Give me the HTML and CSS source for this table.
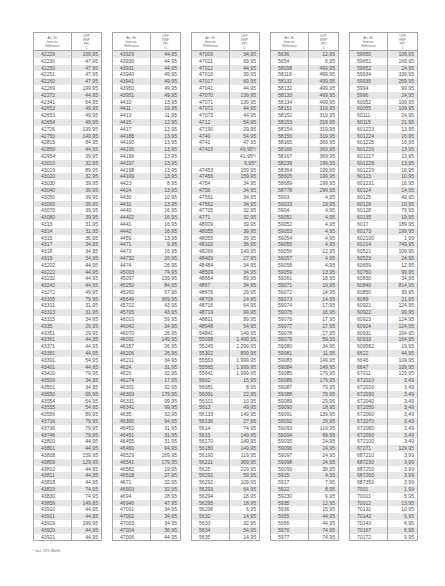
FILE: index.html
```html
<!DOCTYPE html>
<html lang="de">
<head>
<meta charset="utf-8">
<title>Preisliste</title>
<link rel="stylesheet" href="styles.css">
</head>
<body>
<div class="page">
<div class="groups">

<table class="list">
<colgroup><col class="c-art"><col class="c-price"></colgroup>
<thead><tr><th>Art.-Nr.<br>Item no.<br>Référence</th><th>UVP<br>RRP<br>PPI<br>€</th></tr></thead>
<tbody>
<tr><td>42229</td><td>109,95</td></tr>
<tr><td>42230</td><td>47,95</td></tr>
<tr><td>42250</td><td>47,95</td></tr>
<tr><td>42251</td><td>47,95</td></tr>
<tr><td>42260</td><td>47,95</td></tr>
<tr><td>42269</td><td>199,95</td></tr>
<tr><td>42272</td><td>44,95</td></tr>
<tr><td>42341</td><td>64,95</td></tr>
<tr><td>42652</td><td>49,95</td></tr>
<tr><td>42653</td><td>49,95</td></tr>
<tr><td>42654</td><td>49,95</td></tr>
<tr><td>42726</td><td>199,95</td></tr>
<tr><td>42750</td><td>149,95</td></tr>
<tr><td>42815</td><td>84,95</td></tr>
<tr><td>42850</td><td>44,95</td></tr>
<tr><td>42954</td><td>39,95</td></tr>
<tr><td>43010</td><td>32,95</td></tr>
<tr><td>43019</td><td>89,95</td></tr>
<tr><td>43020</td><td>32,95</td></tr>
<tr><td>43030</td><td>39,95</td></tr>
<tr><td>43040</td><td>39,95</td></tr>
<tr><td>43050</td><td>39,95</td></tr>
<tr><td>43060</td><td>39,95</td></tr>
<tr><td>43070</td><td>39,95</td></tr>
<tr><td>43080</td><td>39,95</td></tr>
<tr><td>4313</td><td>31,95</td></tr>
<tr><td>4314</td><td>31,95</td></tr>
<tr><td>4315</td><td>36,95</td></tr>
<tr><td>4317</td><td>34,95</td></tr>
<tr><td>4318</td><td>34,95</td></tr>
<tr><td>4319</td><td>34,95</td></tr>
<tr><td>43202</td><td>44,95</td></tr>
<tr><td>43222</td><td>44,95</td></tr>
<tr><td>43232</td><td>44,95</td></tr>
<tr><td>43242</td><td>44,95</td></tr>
<tr><td>43272</td><td>49,95</td></tr>
<tr><td>43305</td><td>79,95</td></tr>
<tr><td>43311</td><td>31,95</td></tr>
<tr><td>43313</td><td>31,95</td></tr>
<tr><td>43315</td><td>34,95</td></tr>
<tr><td>4335</td><td>29,95</td></tr>
<tr><td>43351</td><td>29,95</td></tr>
<tr><td>43361</td><td>44,95</td></tr>
<tr><td>43371</td><td>44,95</td></tr>
<tr><td>43381</td><td>44,95</td></tr>
<tr><td>43391</td><td>54,95</td></tr>
<tr><td>43401</td><td>44,95</td></tr>
<tr><td>43410</td><td>79,95</td></tr>
<tr><td>43500</td><td>34,95</td></tr>
<tr><td>43501</td><td>34,95</td></tr>
<tr><td>43550</td><td>69,95</td></tr>
<tr><td>43554</td><td>54,95</td></tr>
<tr><td>43555</td><td>54,95</td></tr>
<tr><td>43556</td><td>89,95</td></tr>
<tr><td>43716</td><td>79,95</td></tr>
<tr><td>43736</td><td>79,95</td></tr>
<tr><td>43746</td><td>79,95</td></tr>
<tr><td>43800</td><td>44,95</td></tr>
<tr><td>43801</td><td>44,95</td></tr>
<tr><td>43808</td><td>159,95</td></tr>
<tr><td>43809</td><td>129,95</td></tr>
<tr><td>43810</td><td>44,95</td></tr>
<tr><td>43811</td><td>44,95</td></tr>
<tr><td>43818</td><td>44,95</td></tr>
<tr><td>43820</td><td>74,95</td></tr>
<tr><td>43830</td><td>74,95</td></tr>
<tr><td>43859</td><td>149,95</td></tr>
<tr><td>43910</td><td>44,95</td></tr>
<tr><td>43911</td><td>44,95</td></tr>
<tr><td>43919</td><td>199,95</td></tr>
<tr><td>43920</td><td>44,95</td></tr>
<tr><td>43921</td><td>44,95</td></tr>
</tbody>
</table>

<table class="list">
<colgroup><col class="c-art"><col class="c-price"></colgroup>
<thead><tr><th>Art.-Nr.<br>Item no.<br>Référence</th><th>UVP<br>RRP<br>PPI<br>€</th></tr></thead>
<tbody>
<tr><td>43929</td><td>44,95</td></tr>
<tr><td>43930</td><td>44,95</td></tr>
<tr><td>43931</td><td>44,95</td></tr>
<tr><td>43940</td><td>49,95</td></tr>
<tr><td>43941</td><td>49,95</td></tr>
<tr><td>43950</td><td>49,95</td></tr>
<tr><td>43951</td><td>49,95</td></tr>
<tr><td>4410</td><td>13,95</td></tr>
<tr><td>4411</td><td>19,95</td></tr>
<tr><td>4413</td><td>11,95</td></tr>
<tr><td>4415</td><td>12,95</td></tr>
<tr><td>4417</td><td>13,95</td></tr>
<tr><td>44188</td><td>13,95</td></tr>
<tr><td>44190</td><td>13,95</td></tr>
<tr><td>44195</td><td>13,95</td></tr>
<tr><td>44196</td><td>13,95</td></tr>
<tr><td>44197</td><td>13,95</td></tr>
<tr><td>44198</td><td>13,95</td></tr>
<tr><td>44199</td><td>13,95</td></tr>
<tr><td>4423</td><td>8,95</td></tr>
<tr><td>4424</td><td>13,95</td></tr>
<tr><td>4430</td><td>10,95</td></tr>
<tr><td>4431</td><td>13,95</td></tr>
<tr><td>4440</td><td>16,95</td></tr>
<tr><td>44402</td><td>16,95</td></tr>
<tr><td>4441</td><td>16,95</td></tr>
<tr><td>4442</td><td>16,95</td></tr>
<tr><td>4459</td><td>13,95</td></tr>
<tr><td>4471</td><td>9,95</td></tr>
<tr><td>4473</td><td>16,95</td></tr>
<tr><td>44732</td><td>26,95</td></tr>
<tr><td>4474</td><td>26,95</td></tr>
<tr><td>45093</td><td>74,95</td></tr>
<tr><td>45097</td><td>159,95</td></tr>
<tr><td>45250</td><td>84,95</td></tr>
<tr><td>45260</td><td>57,95</td></tr>
<tr><td>45649</td><td>369,95</td></tr>
<tr><td>45702</td><td>43,95</td></tr>
<tr><td>45705</td><td>43,95</td></tr>
<tr><td>46010</td><td>59,95</td></tr>
<tr><td>46042</td><td>34,95</td></tr>
<tr><td>46070</td><td>26,95</td></tr>
<tr><td>46091</td><td>149,95</td></tr>
<tr><td>46157</td><td>26,95</td></tr>
<tr><td>46206</td><td>26,95</td></tr>
<tr><td>46211</td><td>34,95</td></tr>
<tr><td>4624</td><td>31,95</td></tr>
<tr><td>4626</td><td>32,95</td></tr>
<tr><td>46274</td><td>17,95</td></tr>
<tr><td>46301</td><td>32,95</td></tr>
<tr><td>46303</td><td>179,95</td></tr>
<tr><td>46331</td><td>99,95</td></tr>
<tr><td>46341</td><td>99,95</td></tr>
<tr><td>4635</td><td>32,95</td></tr>
<tr><td>46390</td><td>94,95</td></tr>
<tr><td>46450</td><td>31,95</td></tr>
<tr><td>46451</td><td>31,95</td></tr>
<tr><td>46455</td><td>31,95</td></tr>
<tr><td>46460</td><td>94,95</td></tr>
<tr><td>46529</td><td>169,95</td></tr>
<tr><td>46541</td><td>179,95</td></tr>
<tr><td>46582</td><td>19,95</td></tr>
<tr><td>46618</td><td>27,95</td></tr>
<tr><td>4671</td><td>32,95</td></tr>
<tr><td>46903</td><td>32,95</td></tr>
<tr><td>4694</td><td>28,95</td></tr>
<tr><td>46946</td><td>47,95</td></tr>
<tr><td>47001</td><td>34,95</td></tr>
<tr><td>47002</td><td>34,95</td></tr>
<tr><td>47003</td><td>34,95</td></tr>
<tr><td>47004</td><td>36,95</td></tr>
<tr><td>47006</td><td>44,95</td></tr>
</tbody>
</table>

<table class="list">
<colgroup><col class="c-art"><col class="c-price"></colgroup>
<thead><tr><th>Art.-Nr.<br>Item no.<br>Référence</th><th>UVP<br>RRP<br>PPI<br>€</th></tr></thead>
<tbody>
<tr><td>47009</td><td>34,95</td></tr>
<tr><td>47011</td><td>69,95</td></tr>
<tr><td>47012</td><td>44,95</td></tr>
<tr><td>47016</td><td>39,95</td></tr>
<tr><td>47017</td><td>69,95</td></tr>
<tr><td>47041</td><td>44,95</td></tr>
<tr><td>47070</td><td>139,95</td></tr>
<tr><td>47071</td><td>139,95</td></tr>
<tr><td>47072</td><td>44,95</td></tr>
<tr><td>47073</td><td>44,95</td></tr>
<tr><td>4712</td><td>54,95</td></tr>
<tr><td>47190</td><td>29,95</td></tr>
<tr><td>4740</td><td>54,95</td></tr>
<tr><td>4741</td><td>47,95</td></tr>
<tr><td>47415</td><td>49,95*/</td></tr>
<tr><td></td><td>41,95*/</td></tr>
<tr><td></td><td>9,95*</td></tr>
<tr><td>47453</td><td>159,95</td></tr>
<tr><td>47456</td><td>159,95</td></tr>
<tr><td>4754</td><td>34,95</td></tr>
<tr><td>4756</td><td>34,95</td></tr>
<tr><td>47561</td><td>34,95</td></tr>
<tr><td>47562</td><td>34,95</td></tr>
<tr><td>47705</td><td>32,95</td></tr>
<tr><td>4771</td><td>32,95</td></tr>
<tr><td>48009</td><td>39,95</td></tr>
<tr><td>48055</td><td>39,95</td></tr>
<tr><td>48056</td><td>39,95</td></tr>
<tr><td>48102</td><td>36,95</td></tr>
<tr><td>48266</td><td>149,95</td></tr>
<tr><td>48409</td><td>27,95</td></tr>
<tr><td>48484</td><td>34,95</td></tr>
<tr><td>48509</td><td>34,95</td></tr>
<tr><td>48664</td><td>89,95</td></tr>
<tr><td>4867</td><td>34,95</td></tr>
<tr><td>48676</td><td>29,95</td></tr>
<tr><td>48709</td><td>24,95</td></tr>
<tr><td>48716</td><td>64,95</td></tr>
<tr><td>48719</td><td>99,95</td></tr>
<tr><td>48811</td><td>89,95</td></tr>
<tr><td>48948</td><td>54,95</td></tr>
<tr><td>54841</td><td>149,95</td></tr>
<tr><td>55098</td><td>1.499,95</td></tr>
<tr><td>55245</td><td>2.299,95</td></tr>
<tr><td>55302</td><td>899,95</td></tr>
<tr><td>55563</td><td>1.999,95</td></tr>
<tr><td>55565</td><td>1.999,95</td></tr>
<tr><td>55641</td><td>1.999,95</td></tr>
<tr><td>5602</td><td>15,95</td></tr>
<tr><td>56081</td><td>8,95</td></tr>
<tr><td>56091</td><td>22,95</td></tr>
<tr><td>56101</td><td>10,95</td></tr>
<tr><td>5613</td><td>49,95</td></tr>
<tr><td>56133</td><td>149,95</td></tr>
<tr><td>56136</td><td>27,95</td></tr>
<tr><td>5614</td><td>74,95</td></tr>
<tr><td>5615</td><td>149,95</td></tr>
<tr><td>56170</td><td>149,95</td></tr>
<tr><td>56180</td><td>149,95</td></tr>
<tr><td>56190</td><td>119,95</td></tr>
<tr><td>56211</td><td>369,95</td></tr>
<tr><td>5625</td><td>229,95</td></tr>
<tr><td>56291</td><td>59,95</td></tr>
<tr><td>56292</td><td>109,95</td></tr>
<tr><td>56293</td><td>64,95</td></tr>
<tr><td>56294</td><td>18,95</td></tr>
<tr><td>56295</td><td>18,95</td></tr>
<tr><td>56296</td><td>6,95</td></tr>
<tr><td>5632</td><td>14,95</td></tr>
<tr><td>5633</td><td>32,95</td></tr>
<tr><td>5634</td><td>54,95</td></tr>
<tr><td>5635</td><td>14,95</td></tr>
</tbody>
</table>

<table class="list">
<colgroup><col class="c-art"><col class="c-price"></colgroup>
<thead><tr><th>Art.-Nr.<br>Item no.<br>Référence</th><th>UVP<br>RRP<br>PPI<br>€</th></tr></thead>
<tbody>
<tr><td>5636</td><td>12,95</td></tr>
<tr><td>5654</td><td>6,95</td></tr>
<tr><td>58098</td><td>499,95</td></tr>
<tr><td>58118</td><td>499,95</td></tr>
<tr><td>58131</td><td>499,95</td></tr>
<tr><td>58132</td><td>499,95</td></tr>
<tr><td>58133</td><td>499,95</td></tr>
<tr><td>58134</td><td>499,95</td></tr>
<tr><td>58151</td><td>319,95</td></tr>
<tr><td>58152</td><td>319,95</td></tr>
<tr><td>58153</td><td>319,95</td></tr>
<tr><td>58154</td><td>319,95</td></tr>
<tr><td>58156</td><td>319,95</td></tr>
<tr><td>58165</td><td>369,95</td></tr>
<tr><td>58166</td><td>369,95</td></tr>
<tr><td>58167</td><td>369,95</td></tr>
<tr><td>58239</td><td>199,95</td></tr>
<tr><td>58364</td><td>199,95</td></tr>
<tr><td>58605</td><td>199,95</td></tr>
<tr><td>58689</td><td>199,95</td></tr>
<tr><td>58778</td><td>299,95</td></tr>
<tr><td>5903</td><td>4,95</td></tr>
<tr><td>59033</td><td>19,95</td></tr>
<tr><td>5904</td><td>4,95</td></tr>
<tr><td>59051</td><td>4,95</td></tr>
<tr><td>59052</td><td>4,95</td></tr>
<tr><td>59053</td><td>4,95</td></tr>
<tr><td>59054</td><td>4,95</td></tr>
<tr><td>59055</td><td>4,95</td></tr>
<tr><td>59056</td><td>12,95</td></tr>
<tr><td>59057</td><td>4,95</td></tr>
<tr><td>59058</td><td>4,95</td></tr>
<tr><td>59059</td><td>13,95</td></tr>
<tr><td>59061</td><td>18,95</td></tr>
<tr><td>59071</td><td>19,95</td></tr>
<tr><td>59072</td><td>14,95</td></tr>
<tr><td>59073</td><td>14,95</td></tr>
<tr><td>59074</td><td>17,95</td></tr>
<tr><td>59075</td><td>16,95</td></tr>
<tr><td>59076</td><td>17,95</td></tr>
<tr><td>59077</td><td>17,95</td></tr>
<tr><td>59078</td><td>17,95</td></tr>
<tr><td>59079</td><td>59,95</td></tr>
<tr><td>59080</td><td>34,95</td></tr>
<tr><td>59081</td><td>11,95</td></tr>
<tr><td>59083</td><td>149,95</td></tr>
<tr><td>59084</td><td>149,95</td></tr>
<tr><td>59085</td><td>179,95</td></tr>
<tr><td>59086</td><td>179,95</td></tr>
<tr><td>59087</td><td>79,95</td></tr>
<tr><td>59088</td><td>79,95</td></tr>
<tr><td>59089</td><td>29,95</td></tr>
<tr><td>59090</td><td>18,95</td></tr>
<tr><td>59091</td><td>139,95</td></tr>
<tr><td>59092</td><td>29,95</td></tr>
<tr><td>59093</td><td>119,95</td></tr>
<tr><td>59094</td><td>99,95</td></tr>
<tr><td>59095</td><td>24,95</td></tr>
<tr><td>59096</td><td>24,95</td></tr>
<tr><td>59097</td><td>24,95</td></tr>
<tr><td>59098</td><td>24,95</td></tr>
<tr><td>59099</td><td>39,95</td></tr>
<tr><td>5915</td><td>4,95</td></tr>
<tr><td>5917</td><td>7,95</td></tr>
<tr><td>5922</td><td>8,95</td></tr>
<tr><td>59230</td><td>9,95</td></tr>
<tr><td>5935</td><td>12,95</td></tr>
<tr><td>5936</td><td>15,95</td></tr>
<tr><td>5955</td><td>44,95</td></tr>
<tr><td>5956</td><td>44,95</td></tr>
<tr><td>5976</td><td>74,95</td></tr>
<tr><td>5977</td><td>74,95</td></tr>
</tbody>
</table>

<table class="list">
<colgroup><col class="c-art"><col class="c-price"></colgroup>
<thead><tr><th>Art.-Nr.<br>Item no.<br>Référence</th><th>UVP<br>RRP<br>PPI<br>€</th></tr></thead>
<tbody>
<tr><td>59650</td><td>109,95</td></tr>
<tr><td>59651</td><td>169,95</td></tr>
<tr><td>59652</td><td>24,95</td></tr>
<tr><td>59934</td><td>339,95</td></tr>
<tr><td>59935</td><td>259,95</td></tr>
<tr><td>5994</td><td>99,95</td></tr>
<tr><td>5996</td><td>24,95</td></tr>
<tr><td>60052</td><td>109,95</td></tr>
<tr><td>60055</td><td>109,95</td></tr>
<tr><td>60111</td><td>24,95</td></tr>
<tr><td>60115</td><td>21,95</td></tr>
<tr><td>601223</td><td>13,95</td></tr>
<tr><td>601224</td><td>16,95</td></tr>
<tr><td>601225</td><td>16,95</td></tr>
<tr><td>601226</td><td>13,95</td></tr>
<tr><td>601227</td><td>13,95</td></tr>
<tr><td>601228</td><td>13,95</td></tr>
<tr><td>601229</td><td>16,95</td></tr>
<tr><td>60123</td><td>10,95</td></tr>
<tr><td>601231</td><td>16,95</td></tr>
<tr><td>60124</td><td>14,95</td></tr>
<tr><td>60125</td><td>49,95</td></tr>
<tr><td>60126</td><td>10,95</td></tr>
<tr><td>60128</td><td>79,95</td></tr>
<tr><td>60135</td><td>19,95</td></tr>
<tr><td>6017</td><td>189,95</td></tr>
<tr><td>60173</td><td>199,95</td></tr>
<tr><td>602100</td><td>1,99</td></tr>
<tr><td>60214</td><td>749,95</td></tr>
<tr><td>60521</td><td>109,95</td></tr>
<tr><td>60523</td><td>24,95</td></tr>
<tr><td>60659</td><td>12,95</td></tr>
<tr><td>60760</td><td>99,95</td></tr>
<tr><td>60830</td><td>34,95</td></tr>
<tr><td>60840</td><td>814,95</td></tr>
<tr><td>60850</td><td>99,95</td></tr>
<tr><td>6089</td><td>21,95</td></tr>
<tr><td>60921</td><td>124,95</td></tr>
<tr><td>60922</td><td>99,95</td></tr>
<tr><td>60923</td><td>124,95</td></tr>
<tr><td>60924</td><td>124,95</td></tr>
<tr><td>60931</td><td>164,95</td></tr>
<tr><td>60933</td><td>164,95</td></tr>
<tr><td>609582</td><td>19,95</td></tr>
<tr><td>6622</td><td>44,95</td></tr>
<tr><td>6646</td><td>109,95</td></tr>
<tr><td>6647</td><td>109,95</td></tr>
<tr><td>67011</td><td>129,95</td></tr>
<tr><td>672010</td><td>3,49</td></tr>
<tr><td>672020</td><td>3,49</td></tr>
<tr><td>672030</td><td>3,49</td></tr>
<tr><td>672040</td><td>3,49</td></tr>
<tr><td>672050</td><td>3,49</td></tr>
<tr><td>672060</td><td>3,49</td></tr>
<tr><td>672070</td><td>3,49</td></tr>
<tr><td>672080</td><td>3,49</td></tr>
<tr><td>672090</td><td>3,49</td></tr>
<tr><td>672100</td><td>3,49</td></tr>
<tr><td>67271</td><td>129,95</td></tr>
<tr><td>687210</td><td>3,99</td></tr>
<tr><td>687230</td><td>3,99</td></tr>
<tr><td>687250</td><td>3,99</td></tr>
<tr><td>687260</td><td>3,99</td></tr>
<tr><td>687350</td><td>3,99</td></tr>
<tr><td>7001</td><td>1,99</td></tr>
<tr><td>70011</td><td>5,95</td></tr>
<tr><td>70012</td><td>13,95</td></tr>
<tr><td>70131</td><td>10,95</td></tr>
<tr><td>70142</td><td>6,95</td></tr>
<tr><td>70143</td><td>6,95</td></tr>
<tr><td>70167</td><td>6,95</td></tr>
<tr><td>70172</td><td>9,95</td></tr>
</tbody>
</table>

</div>
<p class="note">* incl. 19% MwSt.</p>
</div>
</body>
</html>
```

FILE: styles.css
```css
html, body {
  margin: 0;
  padding: 0;
  background: #ffffff;
}

body {
  font-family: "Liberation Sans", Arial, sans-serif;
  color: #555555;
}

.page {
  padding: 32px 0 0 33px;
}

.groups {
  display: flex;
  gap: 10px;
  align-items: flex-start;
}

.list {
  width: 68px;
  table-layout: fixed;
  border-collapse: collapse;
  border: 1px solid #a8a8a8;
}

.c-art {
  width: 38px;
}

.c-price {
  width: 30px;
}

.list th {
  height: 17px;
  padding: 0;
  font-size: 3.2px;
  line-height: 4px;
  font-weight: normal;
  text-align: center;
  vertical-align: middle;
  border: 1px solid #a8a8a8;
  color: #666666;
}

.list td {
  height: 6.8px;
  padding: 0;
  font-size: 5.1px;
  line-height: 6.8px;
  white-space: nowrap;
  overflow: hidden;
}

.list td:first-child {
  padding-left: 7px;
  border-right: 1px solid #a8a8a8;
}

.list td:last-child {
  padding-right: 3px;
  text-align: right;
}

.list tbody tr:nth-child(odd) td {
  background: #e6e6e6;
}

.note {
  margin: 8px 0 0 0;
  font-size: 3.6px;
  line-height: 5px;
  color: #666666;
}
```
